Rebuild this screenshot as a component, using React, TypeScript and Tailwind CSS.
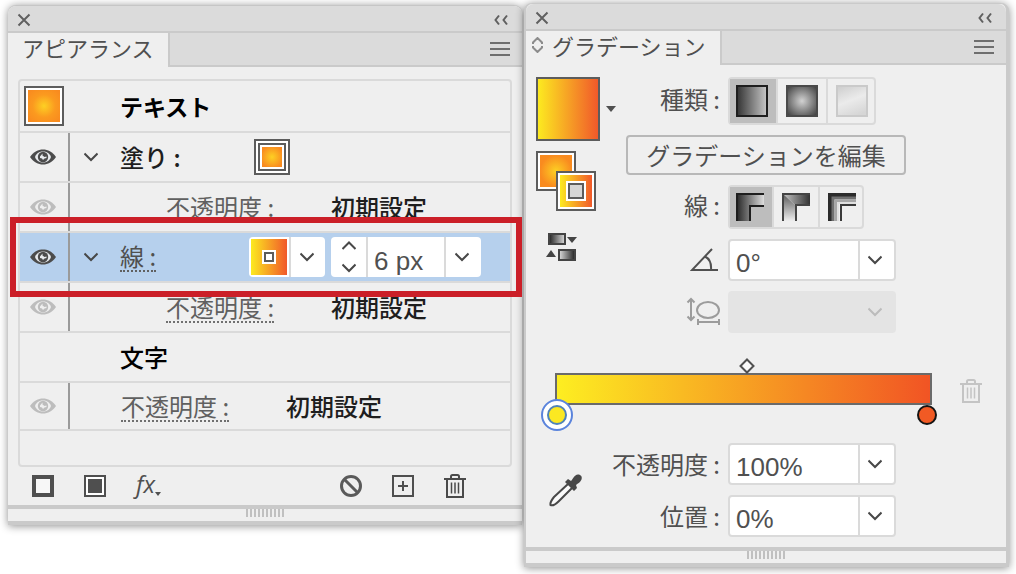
import type { ReactNode } from 'react'

type EyeTone = 'strong' | 'faint'

const jpFont = 'font-["Noto_Sans_CJK_JP",sans-serif]'
const numberFont = 'font-["Liberation_Sans",Arial,sans-serif]'

// ============================================
// Icons
// ============================================

function CloseIcon() {
  return (
    <svg width="14" height="14" viewBox="0 0 14 14" stroke="#606060" strokeWidth="2" fill="none">
      <path d="M1.5 1.5 12.5 12.5M12.5 1.5 1.5 12.5" />
    </svg>
  )
}

function CollapseIcon() {
  return (
    <svg width="14" height="12" viewBox="0 0 14 12" stroke="#606060" strokeWidth="2" fill="none">
      <path d="M5 1.5 1.5 6 5 10.5M13 1.5 9.5 6 13 10.5" />
    </svg>
  )
}

function MenuIcon() {
  return (
    <svg width="20" height="16" viewBox="0 0 20 16" stroke="#6e6e6e" strokeWidth="2">
      <path d="M0 2H20M0 8H20M0 14H20" />
    </svg>
  )
}

function ChevronIcon({ up = false, color = '#484848' }: { up?: boolean; color?: string }) {
  return (
    <svg width="14" height="10" viewBox="0 0 14 10" stroke={color} strokeWidth="2" fill="none">
      <path d={up ? 'M.5 8 7 1.5 13.5 8' : 'M.5 1.5 7 8 13.5 1.5'} />
    </svg>
  )
}

function EyeIcon({ tone }: { tone: EyeTone }) {
  const color = tone === 'strong' ? '#4c4c4c' : '#bdbdbd'
  const paper = tone === 'strong' ? '#e8ebee' : '#efefef'
  return (
    <svg width="26" height="16" viewBox="0 0 26 16">
      <path d="M0 8C4 2.5 8 .5 13 .5S22 2.5 26 8C22 13.5 18 15.5 13 15.5S4 13.5 0 8Z" fill={color} />
      <path d="M5 8C6.5 4 9.5 2.5 13 2.5S19.5 4 21 8C19.5 12 16.5 13.5 13 13.5S6.5 12 5 8Z" fill={paper} />
      <circle cx="13" cy="8" r="5.2" fill={color} />
      <path d="M12.500 4.500v2L14.500 8l2-.5V9l-2 .5-1.500 1.500-1-1.500-2-.5V7.500Z" fill={paper} />
    </svg>
  )
}

function TrashIcon({ color = '#4a4a4a' }: { color?: string }) {
  return (
    <svg width="22" height="24" viewBox="0 0 22 24" stroke={color} strokeWidth="2" fill="none">
      <path d="M0 5H22M3 5V23H19V5M7 4.5V2.5Q7 1 8.5 1H13.5Q15 1 15 2.5V4.5" />
      <path d="M7.5 8.5V19.5M11 8.5V19.5M14.5 8.5V19.5" strokeWidth="1.5" />
    </svg>
  )
}

function StrokeSquareIcon() {
  return (
    <svg width="22" height="22" viewBox="0 0 22 22">
      <rect x="2" y="2" width="18" height="18" fill="#f7f7f7" stroke="#4f4f4f" strokeWidth="4" />
    </svg>
  )
}

function FillSquareIcon() {
  return (
    <svg width="22" height="22" viewBox="0 0 22 22">
      <rect x="1" y="1" width="20" height="20" fill="#fff" stroke="#4f4f4f" strokeWidth="2" />
      <rect x="4" y="4" width="14" height="14" fill="#4f4f4f" />
    </svg>
  )
}

function ClearIcon() {
  return (
    <svg width="22" height="22" viewBox="0 0 22 22" stroke="#5a5a5a" strokeWidth="3" fill="none">
      <circle cx="11" cy="11" r="9.5" />
      <path d="M4.5 4.5 17.5 17.5" />
    </svg>
  )
}

function AddIcon() {
  return (
    <svg width="22" height="22" viewBox="0 0 22 22" stroke="#4f4f4f" strokeWidth="2" fill="none">
      <rect x="1" y="1" width="20" height="20" />
      <path d="M6 11H16M11 6V16" />
    </svg>
  )
}

function TabArrowsIcon() {
  return (
    <svg width="11" height="16" viewBox="0 0 11 16" stroke="#8c8c8c" strokeWidth="2" fill="none">
      <path d="M1 7V5.5L5.500 1 10 5.5V7M1 9V10.500L5.500 15 10 10.500V9" />
    </svg>
  )
}

function AngleIcon() {
  return (
    <svg width="30" height="24" viewBox="0 0 30 24" stroke="#505050" strokeWidth="2" fill="none">
      <path d="M22 1 2 22H28M15 8.5C20 11 21.5 16 21 22" />
    </svg>
  )
}

function AspectIcon() {
  return (
    <svg width="34" height="30" viewBox="0 0 34 30" stroke="#9c9c9c" strokeWidth="2" fill="none">
      <path d="M5 2V23M1.5 5.5 5 2 8.5 5.5M1.5 19.500 5 23 8.5 19.500" />
      <ellipse cx="22" cy="13" rx="11" ry="8" />
      <path d="M12 25H33M12 22V28M33 22V28" />
    </svg>
  )
}

function ReverseIcon() {
  return (
    <svg width="32" height="28" viewBox="0 0 32 28">
      <defs>
        <linearGradient id="reverse-a">
          <stop offset="0" stopColor="#222" />
          <stop offset="1" stopColor="#ddd" />
        </linearGradient>
        <linearGradient id="reverse-b">
          <stop offset="0" stopColor="#ddd" />
          <stop offset="1" stopColor="#222" />
        </linearGradient>
      </defs>
      <rect x="3" y="1" width="16" height="10" fill="url(#reverse-a)" stroke="#444" strokeWidth="2" />
      <path d="M21 4H31L26 10Z" fill="#444" />
      <rect x="13" y="17" width="16" height="10" fill="url(#reverse-b)" stroke="#444" strokeWidth="2" />
      <path d="M0 24H10L5 17Z" fill="#444" />
    </svg>
  )
}

function EyedropperIcon() {
  return (
    <svg width="34" height="34" viewBox="0 0 34 34">
      <path d="M19 11 5 24C2.5 27 1 30 1.5 32C3.5 33 7 31 9.5 28.5L23 15" fill="#fafafa" stroke="#484848" strokeWidth="2" />
      <path d="M16 9 19 6 22 8C24 6 25 2 29 1.5C32 1.5 33.5 4 32.5 6.5C31.5 9 29 10.5 27 12L28 15 25 18Z" fill="#484848" />
    </svg>
  )
}

// ============================================
// Gradient type and stroke icons
// ============================================

function LinearIcon() {
  return (
    <svg width="32" height="32" viewBox="0 0 32 32">
      <defs>
        <linearGradient id="type-linear">
          <stop offset="0" stopColor="#333" />
          <stop offset="1" stopColor="#c8c8c8" />
        </linearGradient>
      </defs>
      <rect x="1" y="1" width="30" height="30" fill="url(#type-linear)" stroke="#1e1e1e" strokeWidth="2" />
    </svg>
  )
}

function RadialIcon() {
  return (
    <svg width="32" height="32" viewBox="0 0 32 32">
      <defs>
        <radialGradient id="type-radial" r=".65">
          <stop offset="0" stopColor="#d2d2d2" />
          <stop offset="1" stopColor="#444" />
        </radialGradient>
      </defs>
      <rect x="1" y="1" width="30" height="30" fill="url(#type-radial)" stroke="#4a4a4a" strokeWidth="2" />
    </svg>
  )
}

function FreeformIcon() {
  return (
    <svg width="32" height="32" viewBox="0 0 32 32">
      <defs>
        <linearGradient id="type-freeform" x1=".2" y1="0" x2=".6" y2="1">
          <stop offset="0" stopColor="#d0d0d0" />
          <stop offset=".5" stopColor="#ebebeb" />
          <stop offset="1" stopColor="#d6d6d6" />
        </linearGradient>
      </defs>
      <rect x="1" y="1" width="30" height="30" fill="url(#type-freeform)" stroke="#cacaca" strokeWidth="2" />
    </svg>
  )
}

function StrokeWithinIcon() {
  return (
    <svg width="28" height="28" viewBox="0 0 28 28">
      <defs>
        <linearGradient id="stroke-within">
          <stop offset="0" stopColor="#222" />
          <stop offset="1" stopColor="#ddd" />
        </linearGradient>
      </defs>
      <path d="M0 0H28V13H14V28H0Z" fill="url(#stroke-within)" />
      <path d="M28 1H1V28M28 13H14V28" fill="none" stroke="#1e1e1e" strokeWidth="2" />
    </svg>
  )
}

function StrokeAlongIcon() {
  return (
    <svg width="28" height="28" viewBox="0 0 28 28">
      <defs>
        <linearGradient id="along-x">
          <stop offset="0" stopColor="#ccc" />
          <stop offset="1" stopColor="#333" />
        </linearGradient>
        <linearGradient id="along-y" x2="0" y2="1">
          <stop offset="0" stopColor="#555" />
          <stop offset="1" stopColor="#eee" />
        </linearGradient>
      </defs>
      <path d="M0 0H28V13H14Z" fill="url(#along-x)" />
      <path d="M0 0 14 13V28H0Z" fill="url(#along-y)" />
      <path d="M28 1H1V28M28 12H14V28" fill="none" stroke="#444" strokeWidth="2" />
    </svg>
  )
}

function StrokeAcrossIcon() {
  return (
    <svg width="28" height="28" viewBox="0 0 28 28" fill="none">
      <path d="M28 2H2V28" stroke="#2b2b2b" strokeWidth="4" />
      <path d="M28 5H5V28" stroke="#707070" strokeWidth="3" />
      <path d="M28 8H8V28" stroke="#a6a6a6" strokeWidth="3" />
      <path d="M28 10H10V28" stroke="#e0e0e0" strokeWidth="2" />
      <path d="M28 12H13V28" stroke="#3a3a3a" strokeWidth="2" />
    </svg>
  )
}

// ============================================
// Panel frame
// ============================================

interface PanelProps {
  title: string
  tabIcon?: ReactNode
  className: string
  children: ReactNode
}

function Panel({ title, tabIcon, className, children }: PanelProps) {
  return (
    <section
      aria-label={title}
      className={`rounded-t-lg border-t border-[#c6c6c6] bg-[#efefef] ${className}`}
    >
      <div className="flex h-[27px] items-center justify-between rounded-t-lg border-b-2 border-[#cacaca] bg-[#dbdbdb] pt-[3px] pr-[14px] pl-[9px]">
        <button type="button" aria-label="閉じる">
          <CloseIcon />
        </button>
        <button type="button" aria-label="折りたたむ">
          <CollapseIcon />
        </button>
      </div>
      <div className="flex h-[34px]">
        <button
          type="button"
          className={`flex items-center gap-[9px] pb-[6px] text-[22px] leading-6 text-[#505050] ${tabIcon ? 'pr-[14px] pl-[6px]' : 'px-[14px]'}`}
        >
          {tabIcon}
          {title}
        </button>
        <div className="flex flex-1 items-center justify-end border-b-2 border-l-2 border-[#cacaca] bg-[#dbdbdb] pr-3">
          <button type="button" aria-label="パネルメニュー">
            <MenuIcon />
          </button>
        </div>
      </div>
      {children}
      <div className="flex h-4 items-start justify-center gap-[2px] border-t-4 border-[#cacaca]">
        {Array.from({ length: 10 }, (_, i) => (
          <span key={i} className="h-2 w-[2px] bg-[#c0c0c0]" />
        ))}
      </div>
    </section>
  )
}

// ============================================
// Appearance panel
// ============================================

function EyeCell({ tone }: { tone: EyeTone }) {
  return (
    <div className="flex w-[50px] shrink-0 items-center justify-center self-stretch border-r-2 border-[#9a9a9a] pr-[2px]">
      <button type="button" aria-label="表示の切り替え">
        <EyeIcon tone={tone} />
      </button>
    </div>
  )
}

function OpacityRow({ nested = false, underlined = false }: { nested?: boolean; underlined?: boolean }) {
  return (
    <div className={`flex items-center border-b-2 border-[#dadada] ${nested ? 'h-[50px]' : 'h-12'}`}>
      <EyeCell tone="faint" />
      <div className={`flex items-baseline gap-[57px] pt-[2px] leading-7 ${nested ? 'pl-24' : 'pl-[51px]'}`}>
        <a href="#opacity" className={`border-b-2 border-dotted text-[#606060] ${underlined ? 'border-[#707070]' : 'border-transparent'}`}>
          不透明度 :
        </a>
        <span className="font-medium text-[#1e1e1e]">初期設定</span>
      </div>
    </div>
  )
}

function Disclosure() {
  return (
    <button type="button" aria-label="展開" className="flex w-[50px] justify-start pl-[14px]">
      <ChevronIcon />
    </button>
  )
}

function AppearancePanel() {
  return (
    <Panel title="アピアランス" className="mt-[5px] border-b-4 border-b-[#cacaca] shadow-[0_1px_8px_rgba(0,0,0,0.45)]">
      <div className="mx-[10px] mt-3 rounded border-2 border-[#dadada] pb-[34px] text-2xl">
        <div className="flex h-[52px] items-center border-b-2 border-[#dadada] pl-1">
          <span className="size-10 border-2 border-[#5c5c5c] bg-white p-[2px]">
            <span className="block size-full bg-radial/srgb from-[#fdd023] via-[#fb9a1f] to-[#f98b1f] to-90%" />
          </span>
          <span className="pl-14 text-[23px] font-bold text-black">テキスト</span>
        </div>

        <div className="flex h-[50px] items-center border-b-2 border-[#dadada]">
          <EyeCell tone="strong" />
          <Disclosure />
          <span className="w-[134px] font-medium text-[#1e1e1e]">塗り :</span>
          <button type="button" aria-label="塗りのカラー" className="size-9 border-2 border-[#5c5c5c] bg-white p-[2px]">
            <span className="block size-full border-2 border-[#5c5c5c] bg-white p-[2px]">
              <span className="block size-full bg-radial/srgb from-[#fdd023] to-[#f98b1f] to-80%" />
            </span>
          </button>
        </div>

        <OpacityRow nested />

        <div className="relative flex h-[50px] items-center border-b-2 border-[#dadada] bg-[#b6d0ed]">
          <EyeCell tone="strong" />
          <Disclosure />
          <div className="w-[129px] leading-7">
            <a href="#stroke" className="inline-block border-b-2 border-dotted border-[#606060] text-[#505050]">
              線 :
            </a>
          </div>
          <div className="flex h-10 divide-x-2 divide-[#dadada] overflow-hidden rounded bg-white">
            <button type="button" aria-label="線のカラー" className="w-[42px] p-[2px]">
              <span className="flex size-full items-center justify-center bg-linear-to-r/srgb from-[#fcea20] to-[#f1592a]">
                <span className="size-[14px] border-2 border-white bg-[#5c5c5c] p-[2px]">
                  <span className="block size-full bg-white" />
                </span>
              </span>
            </button>
            <button type="button" aria-label="カラーを選択" className="flex w-[34px] items-center justify-center pr-[2px]">
              <ChevronIcon />
            </button>
          </div>
          <div className="ml-[6px] flex h-10 divide-x-2 divide-[#dadada] overflow-hidden rounded bg-white">
            <div className="flex w-[37px] flex-col items-center justify-between py-1">
              <button type="button" aria-label="線幅を増やす">
                <ChevronIcon up />
              </button>
              <button type="button" aria-label="線幅を減らす">
                <ChevronIcon />
              </button>
            </div>
            <input
              aria-label="線幅"
              defaultValue="6 px"
              className={`${numberFont} w-[78px] pt-2 pl-[6px] text-[26px] leading-8 text-[#505050]`}
            />
            <button type="button" aria-label="線幅の一覧" className="flex w-[35px] items-center justify-center pr-[4px]">
              <ChevronIcon />
            </button>
          </div>
          {/* highlight frame around the selected stroke row */}
          <div className="pointer-events-none absolute -top-4 -right-3 -bottom-4 -left-[10px] z-10 border-6 border-[#cb1f28]" />
        </div>

        <OpacityRow nested underlined />

        <div className="flex h-[50px] items-center border-b-2 border-[#dadada]">
          <span className="pl-[100px] font-medium text-black">文字</span>
        </div>

        <OpacityRow underlined />
      </div>

      <div className="flex h-[38px] items-center justify-between pr-[56px] pl-6">
        <div className="flex items-center gap-[30px]">
          <button type="button" aria-label="新規線を追加">
            <StrokeSquareIcon />
          </button>
          <button type="button" aria-label="新規塗りを追加">
            <FillSquareIcon />
          </button>
          <button type="button" aria-label="効果を追加" className="flex items-end pb-1 font-['Open_Sans',sans-serif] text-2xl leading-6 text-[#505050] italic">
            fx
            <svg width="6" height="4" viewBox="0 0 6 4">
              <path d="M0 0H6L3 4Z" fill="#505050" />
            </svg>
          </button>
        </div>
        <div className="flex items-center gap-[30px]">
          <button type="button" aria-label="アピアランスを消去">
            <ClearIcon />
          </button>
          <button type="button" aria-label="項目を複製">
            <AddIcon />
          </button>
          <button type="button" aria-label="項目を削除">
            <TrashIcon />
          </button>
        </div>
      </div>
    </Panel>
  )
}

// ============================================
// Gradient panel
// ============================================

interface FieldRowProps {
  id: string
  label: ReactNode
  value?: string
  disabled?: boolean
}

function FieldRow({ id, label, value, disabled = false }: FieldRowProps) {
  return (
    <div className="flex items-center">
      <label htmlFor={id} className="mr-2 flex w-[94px] shrink-0 justify-end whitespace-nowrap">
        {label}
      </label>
      <div
        className={`flex h-[42px] w-[168px] overflow-hidden rounded border-2 ${
          disabled ? 'border-[#e4e4e4] bg-[#e4e4e4]' : 'divide-x-2 divide-[#dadada] border-[#dadada] bg-white'
        }`}
      >
        <input
          id={id}
          defaultValue={value}
          disabled={disabled}
          className={`${numberFont} min-w-0 flex-1 pt-[6px] pl-[6px] text-[26px] leading-8 text-[#505050]`}
        />
        <button type="button" aria-label="値を選択" disabled={disabled} className="flex w-[34px] items-center justify-center pr-[4px]">
          <ChevronIcon color={disabled ? '#bcbcbc' : '#484848'} />
        </button>
      </div>
    </div>
  )
}

interface IconOption {
  name: string
  icon: ReactNode
}

const typeOptions: IconOption[] = [
  { name: '線形グラデーション', icon: <LinearIcon /> },
  { name: '円形グラデーション', icon: <RadialIcon /> },
  { name: 'フリーグラデーション', icon: <FreeformIcon /> },
]

const strokeOptions: IconOption[] = [
  { name: '線にグラデーションを適用', icon: <StrokeWithinIcon /> },
  { name: 'パスに沿って適用', icon: <StrokeAlongIcon /> },
  { name: 'パスに交差して適用', icon: <StrokeAcrossIcon /> },
]

function OptionRow({ label, options }: { label: string; options: IconOption[] }) {
  return (
    <div role="group" aria-label={label} className="flex items-center">
      <span className="mr-2 w-[94px] pb-1 text-right">{label} :</span>
      <div className="flex divide-x-2 divide-[#dadada] rounded border-2 border-[#dadada]">
        {options.map((option, i) => (
          <button
            key={option.name}
            type="button"
            aria-label={option.name}
            aria-pressed={i === 0}
            className={`px-2 py-[6px] first:pl-[6px] last:pr-[6px] ${i === 0 ? 'bg-[#bdbdbd]' : ''}`}
          >
            {option.icon}
          </button>
        ))}
      </div>
    </div>
  )
}

function GradientPanel() {
  return (
    <Panel
      title="グラデーション"
      tabIcon={<TabArrowsIcon />}
      className="relative mt-[3px] border-r-3 border-b-4 border-l-2 border-[#cacaca] shadow-[0_1px_8px_rgba(0,0,0,0.45)]"
    >
      <div className="flex pt-3 text-2xl text-[#505050]">
        <div className="flex w-[100px] shrink-0 flex-col items-start pl-[10px]">
          <div className="flex items-center gap-[6px]">
            <div className="size-16 border-2 border-[#5c5c5c] bg-linear-to-r/srgb from-[#fcea20] to-[#f1592a]" />
            <button type="button" aria-label="グラデーションを選択">
              <svg width="10" height="6" viewBox="0 0 10 6">
                <path d="M0 0H10L5 6Z" fill="#505050" />
              </svg>
            </button>
          </div>
          {/* fill swatch with the stroke swatch lying over it */}
          <div className="relative mt-[10px] size-[60px]">
            <button type="button" aria-label="塗り" className="absolute top-0 left-0 size-10 border-2 border-[#5c5c5c] bg-white p-[2px]">
              <span className="block size-full bg-radial/srgb from-[#fdd023] to-[#f98b1f] to-70%" />
            </button>
            <button type="button" aria-label="線" className="absolute right-0 bottom-0 size-10 border-2 border-[#5c5c5c] bg-white p-[2px]">
              <span className="flex size-full items-center justify-center bg-linear-to-r/srgb from-[#fcea20] to-[#f1592a]">
                <span className="size-5 border-2 border-white bg-[#5c5c5c] p-[2px]">
                  <span className="block size-full bg-[#d6d6d6]" />
                </span>
              </span>
            </button>
          </div>
          <button type="button" aria-label="反転グラデーション" className="mt-[22px] ml-[10px]">
            <ReverseIcon />
          </button>
        </div>

        <div className="flex flex-col items-start gap-[10px]">
          <OptionRow label="種類" options={typeOptions} />
          <button type="button" className="h-10 w-[280px] rounded border-2 border-[#b8b8b8] leading-8">
            グラデーションを編集
          </button>
          <OptionRow label="線" options={strokeOptions} />
          <FieldRow id="angle" label={<AngleIcon />} value="0°" />
          <FieldRow id="aspect" label={<AspectIcon />} disabled />
        </div>
      </div>

      <div className="mt-10 flex items-center gap-7 pr-6 pl-[29px]">
        <div className="relative h-8 flex-1 border-2 border-[#6a6a6a] bg-linear-to-r/srgb from-[#fdee21] to-[#f15424]">
          <button type="button" aria-label="中間点" className="absolute -top-[17px] left-[51%] -translate-x-1/2">
            <svg width="16" height="16" viewBox="0 0 16 16">
              <path d="M8 1.5 14.5 8 8 14.5 1.5 8Z" fill="#fafafa" stroke="#505050" strokeWidth="2" />
            </svg>
          </button>
          <button type="button" aria-label="開始カラー" className="absolute top-6 -left-4">
            <svg width="32" height="32" viewBox="0 0 32 32">
              <circle cx="16" cy="16" r="15" fill="#fff" stroke="#5b84dc" strokeWidth="2" />
              <circle cx="16" cy="16" r="9" fill="#fbe822" stroke="#4f83b8" strokeWidth="2" />
            </svg>
          </button>
          <button type="button" aria-label="終了カラー" className="absolute top-[30px] -right-[7px]">
            <svg width="20" height="20" viewBox="0 0 20 20">
              <circle cx="10" cy="10" r="9" fill="#f15a24" stroke="#141414" strokeWidth="2" />
            </svg>
          </button>
        </div>
        <button type="button" aria-label="分岐点を削除" disabled className="pt-1">
          <TrashIcon color="#c4c4c4" />
        </button>
      </div>

      <div className="mt-[38px] flex items-center pb-[10px] text-2xl text-[#505050]">
        <div className="w-[100px] shrink-0 pl-[23px]">
          <button type="button" aria-label="カラーピッカー" className="block">
            <EyedropperIcon />
          </button>
        </div>
        <div className="flex flex-col gap-[10px]">
          <FieldRow id="stop-opacity" label="不透明度 :" value="100%" />
          <FieldRow id="stop-position" label="位置 :" value="0%" />
        </div>
      </div>
    </Panel>
  )
}

export default function App() {
  return (
    <main className={`${jpFont} grid min-h-screen grid-cols-[514fr_485fr] items-start gap-[2px] overflow-hidden bg-white pr-[7px] pl-2`}>
      <AppearancePanel />
      <GradientPanel />
    </main>
  )
}
